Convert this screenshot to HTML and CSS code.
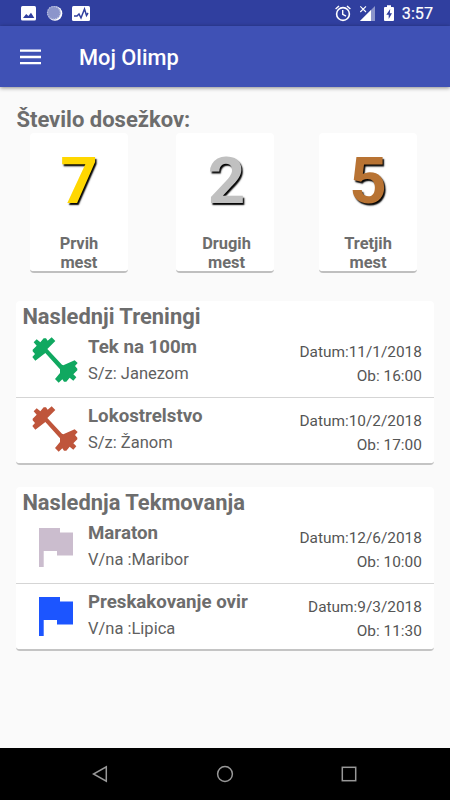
FILE: index.html
```html
<!DOCTYPE html>
<html lang="sl">
<head>
<meta charset="utf-8">
<title>Moj Olimp</title>
<link rel="stylesheet" href="styles.css">
</head>
<body>
<svg class="defs" width="0" height="0" aria-hidden="true">
  <symbol id="dumbbell" viewBox="0 0 180 180">
    <path d="M26 37L35 28L46 37L56 25L63 25L68 32L80 22L91 33L67 57L111 104L115 106L149 91L158 99L150 108L157 116L157 121L145 133L154 142L145 152L134 143L124 155L117 155L112 148L101 158L90 147L105 129L105 118L61 69L31 92L22 81L30 72L23 64L23 59L35 47Z"/>
  </symbol>
  <symbol id="flag" viewBox="0 0 34 39">
    <path d="M0 0H21V4.5H34V27.5H18V23H4.7V39H0Z"/>
  </symbol>
</svg>
<div class="status">
  <svg class="status-left" width="72" height="18" viewBox="0 0 72 18">
    <rect x="1" y="2" width="15" height="14.5" rx="1.5" fill="#fff"/>
    <path d="M3 14L6.2 10L8.4 12L11 8.8L14.3 14Z" fill="#303f9f"/>
    <circle cx="35" cy="9.5" r="7.3" fill="#fff"/>
    <circle cx="33.8" cy="8.8" r="6.8" fill="#8c95cb"/>
    <circle cx="33.8" cy="8.8" r="6.3" fill="none" stroke="#bcc2e2" stroke-width="1.2" stroke-dasharray="1.2 1.2"/>
    <rect x="52" y="2" width="18" height="15" rx="1.5" fill="#fff"/>
    <path d="M54 12H57L59 10L61 14L64.5 5L66.5 11.5L68 9" fill="none" stroke="#303f9f" stroke-width="1.5"/>
  </svg>
  <div class="status-right">
    <svg width="64" height="18" viewBox="0 0 64 18">
      <circle cx="12" cy="10" r="6.4" fill="none" stroke="#fff" stroke-width="1.6"/>
      <path d="M11.7 6V10.3L15 12.2M4.6 5L8 2M19.4 5L16 2" fill="none" stroke="#fff" stroke-width="1.4"/>
      <path d="M29 17L44 2V17Z" fill="#8c95cb"/>
      <path d="M29 17L40 6V17Z" fill="#fff"/>
      <path d="M29.3 2.3L35 8M35 2.3L29.3 8" stroke="#fff" stroke-width="1.1"/>
      <path d="M54 3H56V1.3H60V3H62Q63 3 63 4V16Q63 17 62 17H54Q53 17 53 16V4Q53 3 54 3Z" fill="#fff"/>
      <path d="M59.2 5L55.3 10.7H57.7V15L61 9.3H58.8Z" fill="#303f9f"/>
    </svg>
    <span class="clock">3:57</span>
  </div>
</div>
<header class="toolbar">
  <svg width="21" height="16" viewBox="0 0 21 16"><path d="M0 1.7H21M0 8H21M0 14.1H21" stroke="#fff" stroke-width="2.3"/></svg>
  <h1>Moj Olimp</h1>
</header>
<main>
  <h2 class="heading">Število dosežkov:</h2>
  <section class="medals">
    <div class="medal"><span class="count gold">7</span><span class="label">Prvih<br>mest</span></div>
    <div class="medal second"><span class="count silver">2</span><span class="label">Drugih<br>mest</span></div>
    <div class="medal"><span class="count bronze">5</span><span class="label">Tretjih<br>mest</span></div>
  </section>
  <section class="card">
    <h2>Naslednji Treningi</h2>
    <div class="row">
      <svg class="icon green"><use href="#dumbbell"/></svg>
      <div class="info"><h3>Tek na 100m</h3><p>S/z: Janezom</p></div>
      <div class="when"><p>Datum:11/1/2018</p><p>Ob: 16:00</p></div>
    </div>
    <div class="row">
      <svg class="icon red"><use href="#dumbbell"/></svg>
      <div class="info"><h3>Lokostrelstvo</h3><p>S/z: Žanom</p></div>
      <div class="when"><p>Datum:10/2/2018</p><p>Ob: 17:00</p></div>
    </div>
  </section>
  <section class="card">
    <h2>Naslednja Tekmovanja</h2>
    <div class="row">
      <svg class="icon flag mauve"><use href="#flag"/></svg>
      <div class="info"><h3>Maraton</h3><p>V/na :Maribor</p></div>
      <div class="when"><p>Datum:12/6/2018</p><p>Ob: 10:00</p></div>
    </div>
    <div class="row">
      <svg class="icon flag blue"><use href="#flag"/></svg>
      <div class="info"><h3>Preskakovanje ovir</h3><p>V/na :Lipica</p></div>
      <div class="when"><p>Datum:9/3/2018</p><p>Ob: 11:30</p></div>
    </div>
  </section>
</main>
<nav class="navbar">
  <svg width="16" height="18" viewBox="0 0 16 18"><path d="M14.3 1.8V16.2L1.5 9Z"/></svg>
  <svg width="18" height="18" viewBox="0 0 18 18"><circle cx="9" cy="9" r="7.4"/></svg>
  <svg width="16" height="16" viewBox="0 0 16 16"><rect x="1.3" y="1.3" width="13.4" height="13.4"/></svg>
</nav>
</body>
</html>
```
FILE: styles.css
```css
* { box-sizing: border-box; margin: 0; padding: 0; }
body {
  width: 450px; height: 800px; overflow: hidden;
  display: flex; flex-direction: column;
  background: #fafafa; color: #6d6d6d;
  font-family: Roboto, "Liberation Sans", sans-serif;
}
svg { display: block; flex: none; }
.defs { position: absolute; }
.status {
  height: 26px; flex: none; padding: 4px 17px 0 20px;
  display: flex; justify-content: space-between;
  background: #303f9f; color: #fff;
}
.status-right { display: flex; gap: 7px; }
.clock { font-size: 16.2px; font-weight: 400; -webkit-text-stroke: .2px #fff; line-height: 20px; }
.toolbar {
  height: 61px; flex: none; padding: 2px 20px 0;
  display: flex; align-items: center; gap: 38px;
  background: #3f51b5; color: #fff;
  box-shadow: 0 1px 4px rgba(0, 0, 0, .45);
}
.toolbar svg { margin-top: -2px; }
.toolbar h1 { font-size: 21.8px; font-weight: 500; }
main { flex: 1; padding: 20px 16.4px 0; }
h2 { font-size: 21.9px; line-height: 26px; font-weight: 700; }
.heading { font-size: 22px; }
.medals { display: flex; justify-content: space-between; padding: 0 16.4px 0 13.4px; }
.medal {
  width: 98.3px; height: 140px; padding-top: 9px;
  display: flex; flex-direction: column; align-items: center;
  background: #fff; border-radius: 4px; border-bottom: 2px solid #bfbfbf;
}
.second { margin-left: 3px; padding-left: 3px; }
.count { font-size: 65.5px; line-height: 77px; font-weight: 700; text-shadow: 1.5px 1.5px 1.5px #000; }
.gold { color: #ffd700; }
.silver { color: #c0c0c0; }
.bronze { color: #b87333; }
.label { margin-top: 15px; font-size: 16.4px; line-height: 19.4px; font-weight: 700; text-align: center; }
.card {
  width: 417.5px; height: 164px; margin-top: 28px; padding-top: 3px;
  background: #fff; border-radius: 4px; border-bottom: 2px solid #c4c4c4;
}
.card + .card { margin-top: 22px; }
.card h2 { padding-left: 6px; }
.row { display: flex; height: 67px; padding-right: 12px; }
.row + .row { height: 66px; border-top: 1px solid #d5d5d5; padding-top: 1px; }
.icon { width: 60px; height: 60px; margin: 0 3px 0 8.6px; }
.icon.flag { width: 34px; height: 39px; margin: 12px 15px 0 22.6px; }
.green { fill: #10a860; }
.red { fill: #bf553b; }
.mauve { fill: #cbbdce; }
.blue { fill: #1c55ff; }
.info { flex: 1; padding-top: 6px; }
h3 { font-size: 18.7px; line-height: 23px; font-weight: 700; }
.info p { margin-top: 5px; font-size: 16.5px; line-height: 19px; color: #606060; }
.when { padding-top: 13px; text-align: right; font-size: 15.4px; line-height: 18px; color: #555; }
.when p + p { margin-top: 6px; }
.navbar {
  height: 52px; flex: none; padding: 0 93px 0 92px;
  display: flex; align-items: center; justify-content: space-between; background: #000;
}
.navbar svg { fill: none; stroke: #989898; stroke-width: 1.5; }
```
